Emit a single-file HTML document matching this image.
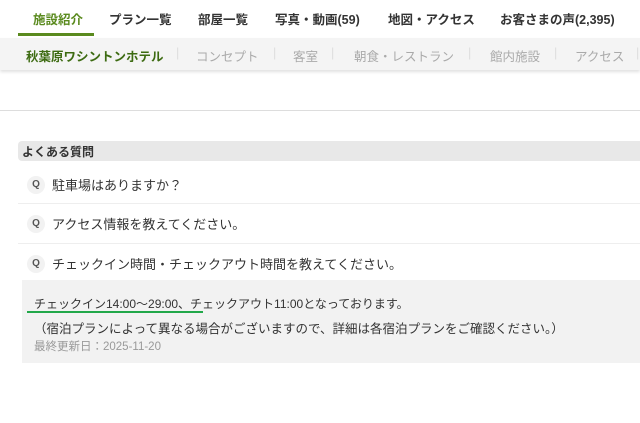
<!DOCTYPE html>
<html><head><meta charset="utf-8"><style>
body{margin:0;width:640px;height:423px;background:#fff;font-family:"Liberation Sans","Noto Sans CJK JP",sans-serif;position:relative;overflow:hidden;color:#333}
.a{position:absolute;white-space:nowrap}
.nav{font-size:12.5px;font-weight:bold;color:#333;top:9px}
.sub{font-size:12.5px;color:#aaa;top:46px}
.sep{color:#ddd}
.q{position:absolute;left:27px;width:18px;height:18px;border-radius:50%;background:#f2f2f2;font-size:10px;font-weight:bold;color:#555;text-align:center;line-height:18px}
.qt{font-size:13px;color:#333;left:52px}
.hr{position:absolute;left:18px;right:0;height:1px;background:#eee}
</style></head><body>
<div class="a nav" style="left:33px;color:#5a8a1e">施設紹介</div>
<div class="a nav" style="left:109px">プラン一覧</div>
<div class="a nav" style="left:198px">部屋一覧</div>
<div class="a nav" style="left:275px">写真・動画(59)</div>
<div class="a nav" style="left:388px">地図・アクセス</div>
<div class="a nav" style="left:500px">お客さまの声(2,395)</div>
<div style="position:absolute;left:18px;top:33px;width:76px;height:3px;background:#5a8a1e"></div>
<div style="position:absolute;left:0;top:38px;width:640px;height:32px;background:#f4f4f4;box-shadow:0 2px 3px rgba(0,0,0,.12)"></div>
<div class="a sub" style="left:26px;color:#3d6b12;font-weight:bold">秋葉原ワシントンホテル</div>
<div class="a sub sep" style="left:176px">|</div>
<div class="a sub" style="left:196px">コンセプト</div>
<div class="a sub sep" style="left:273px">|</div>
<div class="a sub" style="left:293px">客室</div>
<div class="a sub sep" style="left:331px">|</div>
<div class="a sub" style="left:354px">朝食・レストラン</div>
<div class="a sub sep" style="left:468px">|</div>
<div class="a sub" style="left:490px">館内施設</div>
<div class="a sub sep" style="left:554px">|</div>
<div class="a sub" style="left:575px">アクセス</div>
<div class="a sub sep" style="left:636px">|</div>
<div style="position:absolute;left:0;top:110px;width:640px;height:1px;background:#ddd"></div>
<div style="position:absolute;left:18px;top:141px;width:640px;height:20px;background:#e8e8e8;border-radius:4px"></div>
<div class="a" style="left:22px;top:143px;font-size:12px;font-weight:bold;color:#333">よくある質問</div>
<div class="q" style="top:176px">Q</div><div class="a qt" style="top:175px">駐車場はありますか？</div>
<div class="hr" style="top:203px"></div>
<div class="q" style="top:215px">Q</div><div class="a qt" style="top:214px">アクセス情報を教えてください。</div>
<div class="hr" style="top:243px"></div>
<div class="q" style="top:255px">Q</div><div class="a qt" style="top:254px">チェックイン時間・チェックアウト時間を教えてください。</div>
<div style="position:absolute;left:22px;top:280px;width:620px;height:83px;background:#f2f2f2"></div>
<div class="a" style="left:34px;top:295px;font-size:12px;color:#333">チェックイン14:00〜29:00、チェックアウト11:00となっております。</div>
<div style="position:absolute;left:27px;top:311px;width:176px;height:2px;background:#22a84a"></div>
<div class="a" style="left:34px;top:318px;font-size:12.5px;color:#333">（宿泊プランによって異なる場合がございますので、詳細は各宿泊プランをご確認ください。）</div>
<div class="a" style="left:34px;top:338px;font-size:11.5px;color:#999">最終更新日：2025-11-20</div>
</body></html>
